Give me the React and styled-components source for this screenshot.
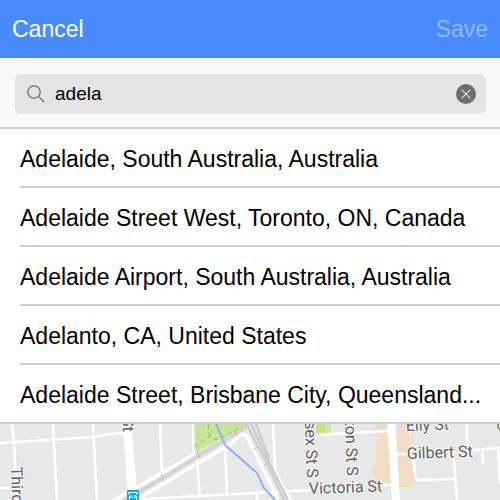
import React, { useState } from 'react'
import styled, { createGlobalStyle } from 'styled-components'

const places = [
  'Adelaide, South Australia, Australia',
  'Adelaide Street West, Toronto, ON, Canada',
  'Adelaide Airport, South Australia, Australia',
  'Adelanto, CA, United States',
  'Adelaide Street, Brisbane City, Queensland...',
]

const SearchIcon = () => (
  <svg width="18" height="18" viewBox="0 0 18 18" fill="none" stroke="#6d6d6d" strokeWidth="1.3" aria-hidden="true">
    <circle cx="7" cy="7" r="6.2" />
    <path d="M11.4 11.4L17.3 17.3" />
  </svg>
)

const ClearIcon = () => (
  <svg width="20" height="20" viewBox="0 0 20 20" aria-hidden="true">
    <circle cx="10" cy="10" r="10" fill="#6d6d6d" />
    <path d="M5.8 5.8L14.2 14.2M14.2 5.8L5.8 14.2" stroke="#e4e4e4" strokeWidth="1.1" />
  </svg>
)

const StreetMap = () => (
  <MapDrawing viewBox="0 424 500 76" preserveAspectRatio="xMidYMin slice" role="img" aria-label="Street map">
    <rect y="424" width="500" height="76" fill="#e8e8e8" />

    {/* parks and shopping blocks */}
    <path d="M193 424H248L225 437L194 453Z" fill="#c5e59b" />
    <path d="M316 424H325V434H316Z" fill="#bce58c" />
    <path d="M325 424H331V434H325Z" fill="#cdeaa8" />
    <path d="M375 424H389L391 484H375V475L371 474L376 461V440L379 439V436L375 435Z" fill="#f1dcc4" />
    <path d="M397 424H409V436H413L414 443L409 446V457H412V471L415 472L417 482L410 487H399Z" fill="#f1dcc4" />

    {/* streets */}
    <g fill="none" stroke="#fff" strokeWidth="2.5">
      <path d="M0 443L93 437L110 434L125 433" />
      <path d="M12 424L14 442L17 500M53 424L57 500M93 424L97 500M0 488H10" />
      <path d="M160 424L162 474M193 424L194 456" />
      <path d="M197 460L200 497M225 445L227 494M257 493V500" />
      <path d="M140 499L200 496L310 490" />
      <path d="M273 424L275 470L281 482L291 500" />
      <path d="M316 435L388 431M370 432L388 431M382 485H392" />
      <path d="M397 454H407M412 451L416 480L454 479M453 448L457 500M467 424V446M472 450L500 448M483 450V464M498 450L500 484" />
    </g>
    <path d="M127 424L133 500" stroke="#fff" strokeWidth="9" />
    <path d="M391 424L396 500" stroke="#fff" strokeWidth="8" />
    <g fill="none" stroke="#fff" strokeWidth="3.5">
      <path d="M108 504L193 455" />
      <path d="M138 499L232 443L241 434L246 435L272 487L278 500" />
    </g>

    {/* rail */}
    <path d="M120 503L163 478L198 456L240 431L252 422" fill="none" stroke="#d4d4d4" strokeWidth="4" />
    <g fill="none" stroke="#cecece" strokeWidth="2.5">
      <path d="M246 424L266 461L285 502" />
      <path d="M251 424L268 460L289 502" />
      <path d="M256 424L269 459" />
    </g>
    <path d="M161 474L164 481M197 451L200 458M234 430L237 436M264 465L270 461M254 449L259 446" stroke="#b8b8b8" />

    <path d="M194 447L209 437L210 435M208 424L209 433L215 440L222 437L243 426" fill="none" stroke="#b1a17b" strokeDasharray="5 3" />
    <path d="M216 424L225 445L240 458L257 473L264 488L275 500" fill="none" stroke="#80b2f8" strokeWidth="1.8" />

    <g>
      <rect x="127" y="490" width="12" height="12" rx="1" fill="#03a9f4" />
      <path d="M129.500 500V496M136.500 500V496M129 494.500V492.500H137V494.500M131 495V497.500H135V495" fill="none" stroke="#fff" strokeWidth="1.200" />
    </g>
    <circle cx="502" cy="426" r="4" fill="none" stroke="#8a7440" strokeWidth="1.5" />

    <StreetNames>
      <text transform="translate(11 467) rotate(88)">Third</text>
      <text transform="translate(123 432) rotate(88)" textAnchor="end">St</text>
      <text transform="translate(307 478) rotate(88)" textAnchor="end">Essex St S</text>
      <text transform="translate(347 476) rotate(88)" textAnchor="end">Carlton St S</text>
      <text transform="translate(309 494) rotate(-2)">Victoria St</text>
      <text transform="translate(407 459) rotate(-2)">Gilbert St</text>
      <text transform="translate(406 431) rotate(-2)">Elly St</text>
    </StreetNames>
  </MapDrawing>
)

const App = () => {
  const [query, setQuery] = useState('adela')
  return (
    <Page>
      <GlobalStyle />
      <Header>
        <HeaderButton type="button">Cancel</HeaderButton>
        <HeaderButton type="button" disabled>Save</HeaderButton>
      </Header>
      <SearchBar>
        <SearchField>
          <SearchIcon />
          <SearchInput
            aria-label="Search places"
            value={query}
            onChange={event => setQuery(event.target.value)}
          />
          <ClearButton type="button" aria-label="Clear" onClick={() => setQuery('')}>
            <ClearIcon />
          </ClearButton>
        </SearchField>
      </SearchBar>
      <PlaceList>
        {places.map(place => (
          <PlaceItem key={place}>
            <PlaceButton type="button">{place}</PlaceButton>
          </PlaceItem>
        ))}
      </PlaceList>
      <StreetMap />
    </Page>
  )
}

export default App

const GlobalStyle = createGlobalStyle`
  * {
    box-sizing: border-box;
  }
  body {
    margin: 0;
    background: #e8e8e8;
  }
  button,
  input {
    margin: 0;
    padding: 0;
    border: 0;
    background: none;
    font: inherit;
    color: inherit;
  }
`

const Page = styled.div`
  display: flex;
  flex-direction: column;
  min-height: 100vh;
  font-family: 'Liberation Sans', Arial, sans-serif;
  font-size: 23px;
  color: #000;
`

const Header = styled.header`
  display: flex;
  align-items: center;
  justify-content: space-between;
  height: 58px;
  padding: 0 12px;
  background: #488aff;
  color: #fff;
`

const HeaderButton = styled.button`
  line-height: 28px;
  cursor: pointer;

  &:disabled {
    opacity: 0.4;
    cursor: default;
  }
`

const SearchBar = styled.div`
  padding: 16px 14px 13px 15px;
  background: #f8f8f8;
  border-bottom: 2px solid #cecdd2;
`

const SearchField = styled.div`
  display: flex;
  align-items: center;
  height: 40px;
  padding: 0 10px 0 12px;
  border-radius: 6px;
  background: #e4e4e4;
`

const SearchInput = styled.input`
  flex: 1;
  min-width: 0;
  margin: 0 10px;
  font-size: 19px;
  line-height: 24px;
  outline: none;
`

const ClearButton = styled.button`
  display: flex;
  cursor: pointer;
`

const PlaceList = styled.ul`
  margin: 0;
  padding: 0;
  list-style: none;
  background: #fff;
  border-bottom: 2px solid #cecdd2;
`

const PlaceItem = styled.li`
  margin-left: 20px;

  & + & {
    border-top: 2px solid #cecdd2;
  }
`

const PlaceButton = styled.button`
  display: block;
  width: 100%;
  height: 57px;
  padding: 3px 8px 0 0;
  overflow: hidden;
  text-align: left;
  text-overflow: ellipsis;
  white-space: nowrap;
  cursor: pointer;
`

const MapDrawing = styled.svg`
  display: block;
  flex: 1;
  width: 100%;
  min-height: 76px;
`

const StreetNames = styled.g`
  font-family: Roboto, sans-serif;
  font-size: 16px;
  fill: #616161;
  stroke: #f5f5f5;
  stroke-width: 2px;
  paint-order: stroke;
`
